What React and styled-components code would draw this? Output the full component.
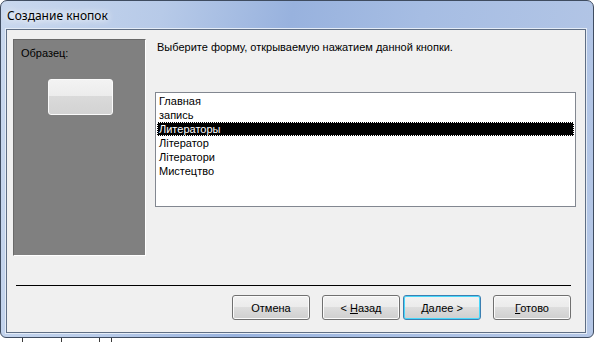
import React from 'react'
import styled, { createGlobalStyle } from 'styled-components'

const GlobalStyle = createGlobalStyle`
  html, body {
    margin: 0;
    padding: 0;
    background: #ffffff;
  }
  body {
    font-family: "Liberation Sans", Arial, sans-serif;
  }
`

const forms = ['Главная', 'запись', 'Литераторы', 'Літератор', 'Літератори', 'Мистецтво']
// columns of the sheet peeking out below the dialog
const sheetCols = [23, 39, 38, 12]

const App = () => {
  return (
    <>
      <GlobalStyle />
      <Window>
        <TitleBar>
          <Title>Создание кнопок</Title>
        </TitleBar>
        <Client>
          <Body>
            <SamplePanel>
              <SampleLabel>Образец:</SampleLabel>
              <SampleButton />
            </SamplePanel>
            <RightColumn>
              <Instruction>Выберите форму, открываемую нажатием данной кнопки.</Instruction>
              <ListBox>
                {forms.map((name) => (
                  <ListItem key={name} selected={name === 'Литераторы'}>
                    {name}
                  </ListItem>
                ))}
              </ListBox>
            </RightColumn>
          </Body>
          <Separator />
          <ButtonRow>
            <Button>Отмена</Button>
            <ButtonPair>
              <Button>&lt; <u>Н</u>азад</Button>
              <Button focused><u>Д</u>алее &gt;</Button>
            </ButtonPair>
            <Button><u>Г</u>отово</Button>
          </ButtonRow>
        </Client>
      </Window>
      <Sheet>
        {sheetCols.map((w, i) => (
          <SheetCell key={i} style={{ width: w }} />
        ))}
      </Sheet>
    </>
  )
}

export default App

const Window = styled.div`
  width: 594px;
  height: 338px;
  box-sizing: border-box;
  display: flex;
  flex-direction: column;
  border: 1px solid #3f4c60;
  border-radius: 7px 7px 6px 6px;
  background: linear-gradient(100deg, #c9d8ee 0%, #b7cae8 25%, #98b2de 45%, #a6bde3 65%, #b5c7e6 100%);
  overflow: hidden;
`
const TitleBar = styled.div`
  height: 28px;
  display: flex;
  align-items: center;
  padding-left: 6px;
  flex-shrink: 0;
`
const Title = styled.span`
  font-family: "Noto Sans", "Open Sans", sans-serif;
  font-size: 12px;
  color: #000;
  text-shadow: 0 0 6px #fff, 0 0 10px #fff;
`
const Client = styled.div`
  margin: 0 7px 0 5px;
  height: 304px;
  box-sizing: border-box;
  border: 1px solid #5f6e84;
  box-shadow: 0 0 0 1px #e4ecf7;
  background: #f0f0f0;
  display: flex;
  flex-direction: column;
  font-size: 11px;
  color: #000;
`
const Body = styled.div`
  display: flex;
  gap: 9px;
  padding: 9px 9px 0 6px;
`
const SamplePanel = styled.div`
  width: 133px;
  height: 217px;
  box-sizing: border-box;
  background: #808080;
  border-top: 1px solid #696969;
  border-left: 1px solid #696969;
  border-right: 1px solid #fff;
  border-bottom: 1px solid #fff;
  display: flex;
  flex-direction: column;
  align-items: center;
`
const SampleLabel = styled.div`
  align-self: flex-start;
  margin: 6px 0 0 7px;
  line-height: 14px;
`
const SampleButton = styled.div`
  margin-top: 19px;
  margin-left: 1px;
  width: 65px;
  height: 36px;
  box-sizing: border-box;
  border: 1px solid #fafafa;
  border-radius: 3px;
  background: linear-gradient(#f3f3f3 0%, #ececec 46%, #dadada 47%, #d3d3d3 100%);
`
const RightColumn = styled.div`
  flex: 1;
  display: flex;
  flex-direction: column;
`
const Instruction = styled.div`
  margin-top: 1px;
  padding-left: 2px;
  line-height: 14px;
`
const ListBox = styled.div`
  margin-top: 38px;
  height: 115px;
  box-sizing: border-box;
  border: 1px solid #828790;
  background: #fff;
  padding: 1px 1px 0 1px;
`
const ListItem = styled.div`
  height: 14px;
  line-height: 14px;
  padding-left: 2px;
  box-sizing: border-box;
  background: ${(p) => (p.selected ? '#000' : 'transparent')};
  color: ${(p) => (p.selected ? '#fff' : '#000')};
  outline: ${(p) => (p.selected ? '1px dotted #fff' : 'none')};
  outline-offset: -1px;
`
const Separator = styled.div`
  margin: 29px 14px 0 9px;
  height: 1px;
  background: #000;
`
const ButtonRow = styled.div`
  display: flex;
  justify-content: flex-end;
  gap: 12px;
  margin: 9px 14px 0 0;
`
const ButtonPair = styled.div`
  display: flex;
  gap: 3px;
`
const Button = styled.button`
  width: 78px;
  height: 25px;
  box-sizing: border-box;
  padding: 0;
  font-family: "Liberation Sans", Arial, sans-serif;
  font-size: 11px;
  color: #000;
  border: 1px solid ${(p) => (p.focused ? '#3c7fb1' : '#707070')};
  border-radius: 3px;
  background: linear-gradient(#f2f2f2 0%, #ebebeb 48%, #dddddd 50%, #cfcfcf 100%);
  box-shadow: inset 0 0 0 1px ${(p) => (p.focused ? '#48d8fb' : '#fbfbfb')};
  & u {
    text-decoration: underline;
  }
`
const Sheet = styled.div`
  display: flex;
  height: 4px;
`
const SheetCell = styled.div`
  flex-shrink: 0;
  box-sizing: border-box;
  border-right: 1px solid #3a3a3a;
`
